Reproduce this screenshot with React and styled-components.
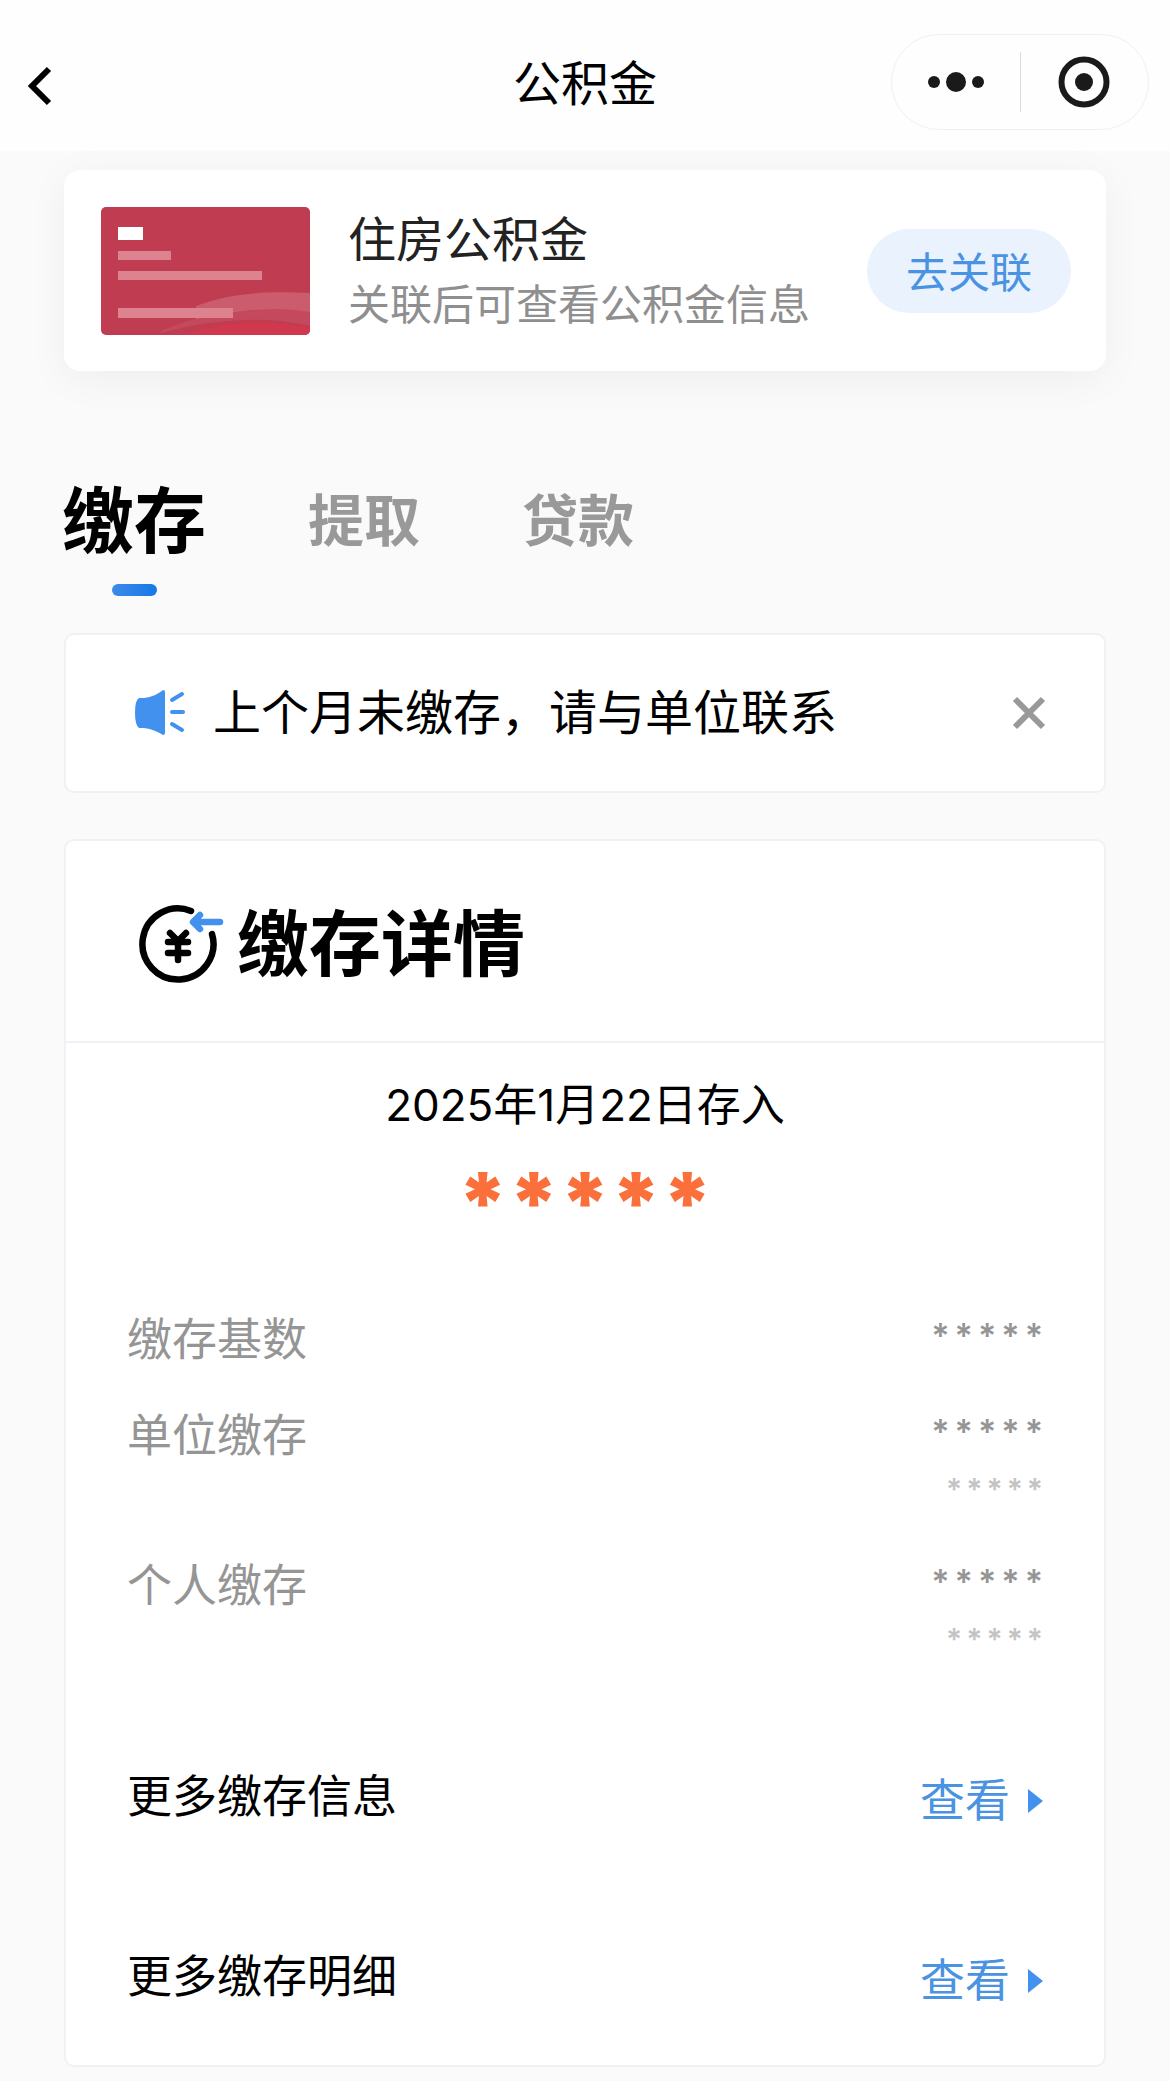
import React, { useState } from 'react';
import styled, { createGlobalStyle } from 'styled-components';

const GlobalStyle = createGlobalStyle`
  * {
    box-sizing: border-box;
  }

  body {
    margin: 0;
    background-color: #fafafa;
    color: #000;
    font-family: Inter, 'Noto Sans CJK SC', sans-serif;
    -webkit-font-smoothing: antialiased;
  }

  button {
    margin: 0;
    padding: 0;
    border: 0;
    background: none;
    color: inherit;
    font: inherit;
    cursor: pointer;
  }

  h1, h2, p, dl, dd {
    margin: 0;
  }

  svg {
    display: block;
    flex-shrink: 0;
  }
`;

const NavBar = styled.header`
  display: grid;
  grid-template-columns: 1fr auto 1fr;
  align-items: center;
  height: 151px;
  padding: 12px 21px 0;
  background-color: #fefefe;
`;

const NavTitle = styled.h1`
  padding-top: 4px;
  font-size: 48px;
  font-weight: 400;
  line-height: 64px;
`;

const BackButton = styled.button`
  justify-self: start;
  padding-top: 8px;
`;

const Capsule = styled.div`
  display: flex;
  align-items: center;
  justify-self: end;
  width: 258px;
  height: 96px;
  border: 1px solid #f0f0f0;
  border-radius: 48px;
`;

const CapsuleButton = styled.button`
  display: flex;
  flex: 1;
  align-items: center;
  justify-content: center;
  height: 60px;

  & + & {
    border-left: 1px solid #dcdcdc;
  }
`;

const Content = styled.main`
  padding: 19px 64px 15px;
`;

const LinkCard = styled.section`
  display: flex;
  align-items: center;
  padding: 36px 35px 35px 37px;
  border-radius: 16px;
  background-color: #fff;
  box-shadow: 0 8px 40px rgba(0, 0, 0, 0.05);
`;

const LinkCardText = styled.div`
  flex: 1;
  margin-left: 38px;
`;

const LinkCardTitle = styled.h2`
  color: #222;
  font-size: 48px;
  font-weight: 400;
  line-height: 68px;
`;

const LinkCardHint = styled.p`
  color: #8f8f8f;
  font-size: 42px;
  line-height: 62px;
`;

const LinkButton = styled.button`
  width: 204px;
  height: 84px;
  padding-bottom: 4px;
  border-radius: 42px;
  background-color: #e9f2fd;
  color: #4a93e2;
  font-size: 42px;
`;

const Tabs = styled.div`
  display: flex;
  gap: 102px;
  margin: 100px 0 37px -2px;
`;

const Tab = styled.button`
  display: flex;
  flex-direction: column;
  align-items: center;
  color: ${({ $active }) => ($active ? '#000' : '#999')};
  font-size: ${({ $active }) => ($active ? '72px' : '56px')};
  font-weight: 700;
  line-height: 100px;

  &::after {
    content: '';
    width: 45px;
    height: 12px;
    margin-top: 13px;
    border-radius: 6px;
    background: ${({ $active }) => ($active ? 'linear-gradient(90deg, #3e8ae8, #1579e6)' : 'transparent')};
  }
`;

const Panel = styled.section`
  border: 2px solid #f0f0f6;
  border-radius: 10px;
  background-color: #fff;
`;

const Notice = styled(Panel)`
  display: flex;
  align-items: center;
  height: 160px;
  margin-bottom: 46px;
  padding: 0 58px 0 68px;
`;

const NoticeText = styled.p`
  flex: 1;
  margin-left: 27px;
  font-size: 48px;
  line-height: 64px;
`;

const DetailHeader = styled.div`
  display: flex;
  align-items: center;
  height: 202px;
  padding: 6px 73px 0;
  border-bottom: 2px solid #f0f0f6;
`;

const DetailTitle = styled.h2`
  margin-left: 10px;
  font-size: 72px;
  font-weight: 700;
  line-height: 100px;
`;

const DetailBody = styled.div`
  padding: 30px 61px 48px;
`;

const DepositDate = styled.p`
  font-size: 44px;
  line-height: 64px;
  text-align: center;
`;

const Amount = styled.p`
  height: 100px;
  margin-bottom: 71px;
  color: #fb6f3b;
  font-size: 84px;
  font-weight: 900;
  line-height: 132px;
  text-align: center;
`;

const Fields = styled.dl`
  display: flex;
  flex-direction: column;
  gap: 32px;
`;

const Field = styled.div`
  display: flex;
  justify-content: space-between;
  color: #959595;
  font-size: 45px;
  line-height: 64px;
`;

const FieldValue = styled.dd`
  display: flex;
  justify-content: flex-end;
  gap: 5px;
  font-size: 34px;
  font-weight: 600;
  line-height: 56px;
`;

const FieldNote = styled(FieldValue)`
  gap: 4px;
  padding-bottom: 4px;
  color: #c4c4c4;
  font-size: 30px;
  line-height: 58px;
`;

const MoreList = styled.div`
  display: flex;
  flex-direction: column;
  gap: 108px;
  margin-top: 93px;
`;

const MoreRow = styled.div`
  display: flex;
  justify-content: space-between;
  font-size: 45px;
  line-height: 64px;
`;

const MoreLink = styled.a`
  display: flex;
  align-items: center;
  gap: 18px;
  color: #4a93e2;
  line-height: 72px;
  text-decoration: none;
`;

const BackIcon = () => (
  <svg width="36" height="44" viewBox="0 0 36 44" fill="none" stroke="#000" strokeWidth="6">
    <path d="M28 5 L11 22 L28 39" />
  </svg>
);

const MoreIcon = () => (
  <svg width="56" height="22" viewBox="0 0 56 22" fill="#1a1a1a">
    <circle cx="6" cy="11" r="6" />
    <circle cx="28" cy="11" r="10" />
    <circle cx="50" cy="11" r="6" />
  </svg>
);

const TargetIcon = () => (
  <svg width="52" height="52" viewBox="0 0 52 52">
    <circle cx="26" cy="26" r="22.5" fill="none" stroke="#1a1a1a" strokeWidth="6" />
    <circle cx="26" cy="26" r="9" fill="#1a1a1a" />
  </svg>
);

const CardPicture = () => (
  <svg width="209" height="128" viewBox="0 0 209 128">
    <defs>
      <clipPath id="card">
        <rect width="209" height="128" rx="5" />
      </clipPath>
    </defs>
    <g clipPath="url(#card)">
      <rect width="209" height="128" fill="#c03c50" />
      <path d="M95 99 C130 86 165 84 209 86 V105 C175 99 140 102 95 112 Z" fill="#fff" opacity="0.17" />
      <path d="M60 124 C110 102 165 98 209 105 V119 C165 108 110 112 60 126 Z" fill="#fff" opacity="0.07" />
      <path d="M82 128 C120 113 165 113 209 120 V128 Z" fill="#cf384d" />
      <rect x="17" y="20" width="25" height="13" fill="#fff" />
      <g fill="#dc838f">
        <rect x="17" y="44" width="53" height="9" />
        <rect x="17" y="64" width="144" height="9" />
        <rect x="17" y="101" width="115" height="10" />
      </g>
    </g>
  </svg>
);

const HornIcon = () => (
  <svg width="52" height="46" viewBox="0 0 52 46" fill="#4391ee">
    <path d="M5 8 L10 8 C18 7 24 4 29 0 Q31 0 31 2 V43 Q31 45 29 45 C24 42 18 39 10 38 L5 38 Q1 35 1 23 Q1 10 5 8 Z" />
    <g stroke="#4391ee" strokeWidth="4" strokeLinecap="round">
      <path d="M38 10 L48 4" />
      <path d="M38 22 H49" />
      <path d="M38 34 L48 40" />
    </g>
  </svg>
);

const CloseIcon = () => (
  <svg width="34" height="34" viewBox="0 0 34 34" fill="none" stroke="#999" strokeWidth="6">
    <path d="M3 3 L31 31 M31 3 L3 31" />
  </svg>
);

const DepositIcon = () => (
  <svg width="88" height="88" viewBox="0 0 88 88" fill="none" strokeLinecap="round" strokeLinejoin="round">
    <g stroke="#000" strokeWidth="6.5">
      <path d="M52 11 A35.5 35.5 0 1 0 73 34" />
      <path d="M31 33 L39 41 L47 33" />
      <path d="M29 42 H49 M29 53 H49 M39 41 V60" />
    </g>
    <path d="M81 22 H55 M61 15 L54 22 L61 29" stroke="#4391ee" strokeWidth="6.5" />
  </svg>
);

const TriangleIcon = () => (
  <svg width="15" height="24" viewBox="0 0 15 24" fill="#4391ee">
    <path d="M0 0 L15 12 L0 24 Z" />
  </svg>
);

const tabs = ['缴存', '提取', '贷款'];

const fields = [
  { label: '缴存基数', value: '*****' },
  { label: '单位缴存', value: '*****', note: '*****' },
  { label: '个人缴存', value: '*****', note: '*****' },
];

const moreItems = ['更多缴存信息', '更多缴存明细'];

const spread = text => [...text].map((char, index) => <span key={index}>{char}</span>);

const App = () => {
  const [activeTab, setActiveTab] = useState(tabs[0]);

  return (
    <>
      <GlobalStyle />
      <NavBar>
        <BackButton aria-label="返回">
          <BackIcon />
        </BackButton>
        <NavTitle>公积金</NavTitle>
        <Capsule>
          <CapsuleButton aria-label="更多">
            <MoreIcon />
          </CapsuleButton>
          <CapsuleButton aria-label="关闭">
            <TargetIcon />
          </CapsuleButton>
        </Capsule>
      </NavBar>
      <Content>
        <LinkCard>
          <CardPicture />
          <LinkCardText>
            <LinkCardTitle>住房公积金</LinkCardTitle>
            <LinkCardHint>关联后可查看公积金信息</LinkCardHint>
          </LinkCardText>
          <LinkButton>去关联</LinkButton>
        </LinkCard>
        <Tabs role="tablist">
          {tabs.map(tab => (
            <Tab
              key={tab}
              role="tab"
              aria-selected={tab === activeTab}
              $active={tab === activeTab}
              onClick={() => setActiveTab(tab)}
            >
              {tab}
            </Tab>
          ))}
        </Tabs>
        <Notice>
          <HornIcon />
          <NoticeText>上个月未缴存，请与单位联系</NoticeText>
          <button aria-label="关闭提示">
            <CloseIcon />
          </button>
        </Notice>
        <Panel>
          <DetailHeader>
            <DepositIcon />
            <DetailTitle>缴存详情</DetailTitle>
          </DetailHeader>
          <DetailBody>
            <DepositDate>2025年1月22日存入</DepositDate>
            <Amount>*****</Amount>
            <Fields>
              {fields.map(({ label, value, note }) => (
                <Field key={label}>
                  <dt>{label}</dt>
                  <div>
                    <FieldValue>{spread(value)}</FieldValue>
                    {note && <FieldNote>{spread(note)}</FieldNote>}
                  </div>
                </Field>
              ))}
            </Fields>
            <MoreList>
              {moreItems.map(item => (
                <MoreRow key={item}>
                  <span>{item}</span>
                  <MoreLink href="#">
                    查看
                    <TriangleIcon />
                  </MoreLink>
                </MoreRow>
              ))}
            </MoreList>
          </DetailBody>
        </Panel>
      </Content>
    </>
  );
};

export default App;
